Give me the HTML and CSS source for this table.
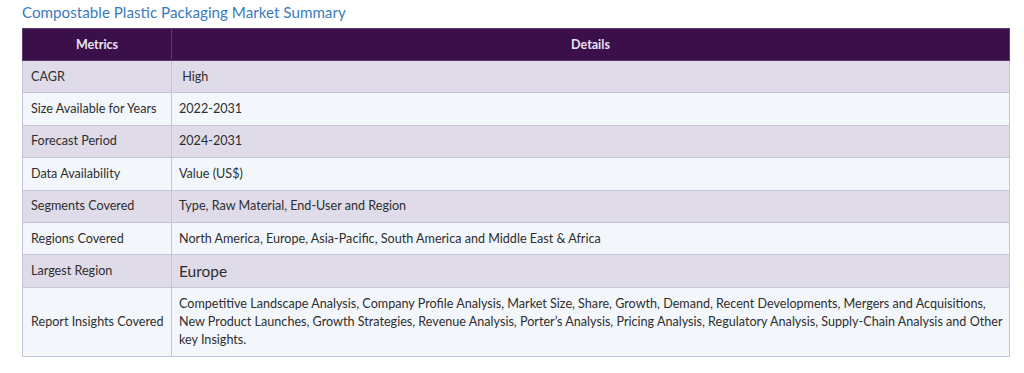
FILE: index.html
```html
<!DOCTYPE html>
<html>
<head>
<meta charset="utf-8">
<link rel="stylesheet" href="styles.css">
</head>
<body>
<div class="wrap">
  <h2 class="title">Compostable Plastic Packaging Market Summary</h2>
  <table class="summary">
    <thead>
      <tr><th class="c1">Metrics</th><th>Details</th></tr>
    </thead>
    <tbody>
      <tr><td class="c1">CAGR</td><td>&nbsp;High</td></tr>
      <tr><td class="c1">Size Available for Years</td><td>2022-2031</td></tr>
      <tr><td class="c1">Forecast Period</td><td>2024-2031</td></tr>
      <tr><td class="c1">Data Availability</td><td>Value (US$)</td></tr>
      <tr><td class="c1">Segments Covered</td><td>Type, Raw Material, End-User and Region</td></tr>
      <tr><td class="c1">Regions Covered</td><td>North America, Europe, Asia-Pacific, South America and Middle East &amp; Africa</td></tr>
      <tr><td class="c1">Largest Region</td><td class="big">Europe</td></tr>
      <tr class="tall"><td class="c1">Report Insights Covered</td><td>Competitive Landscape Analysis, Company Profile Analysis, Market Size, Share, Growth, Demand, Recent Developments, Mergers and Acquisitions, New Product Launches, Growth Strategies, Revenue Analysis, Porter’s Analysis, Pricing Analysis, Regulatory Analysis, Supply-Chain Analysis and Other key Insights.</td></tr>
    </tbody>
  </table>
</div>
</body>
</html>
```
FILE: styles.css
```css
html, body {
  margin: 0;
  padding: 0;
  background: #ffffff;
}
.wrap {
  padding: 3px 14px 0 22px;
  font-family: Lato, "Open Sans", sans-serif;
}
.title {
  margin: 0 0 6px 0;
  font-size: 15.2px;
  font-weight: 400;
  color: #3a7bbd;
  line-height: 19px;
}
.summary {
  width: 988px;
  border-collapse: collapse;
  table-layout: fixed;
  font-size: 12.6px;
  color: #2e2e2e;
}
.summary th {
  background: #3b104a;
  color: #e9e3f0;
  font-weight: 700;
  height: 31px;
  padding: 0;
  border: 1px solid #5a3a6a;
  font-size: 12.5px;
}
.summary th.c1 {
  width: 148px;
}
.summary td {
  height: 31.4px;
  padding: 0 3px 0 7px;
  border: 1px solid #c6c3d6;
  line-height: 18px;
}
.summary td.c1 {
  padding-left: 8px;
  white-space: nowrap;
}
.summary tbody tr:nth-child(odd) td {
  background: #dfdbe8;
}
.summary tbody tr:nth-child(even) td {
  background: #f3f7fb;
}
.summary td.big {
  font-size: 15.5px;
}
.summary tr.tall td {
  height: 67px;
  padding-top: 1px;
}
```
